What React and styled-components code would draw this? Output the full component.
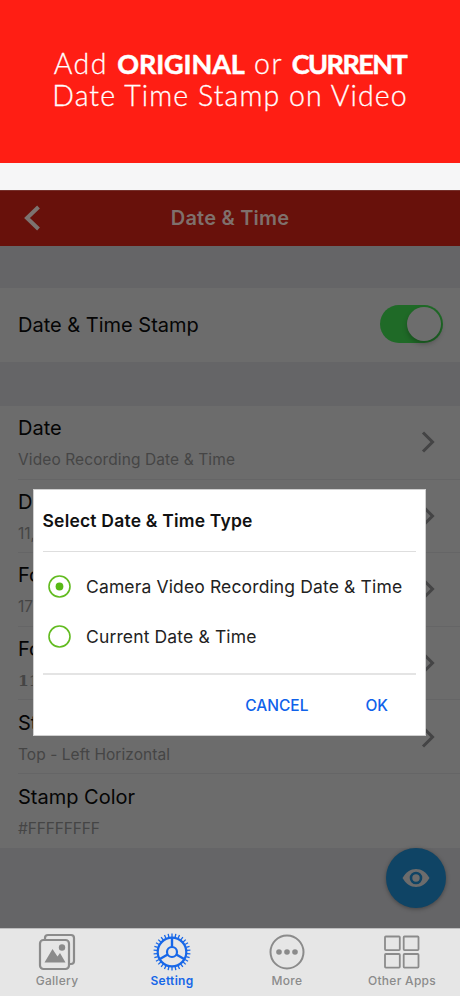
import React from 'react';
import styled, { createGlobalStyle } from 'styled-components';

const GlobalStyle = createGlobalStyle`
  * {
    box-sizing: border-box;
  }
  body {
    margin: 0;
    font-family: Inter, 'Liberation Sans', sans-serif;
  }
`;

const Page = styled.div`
  position: relative;
  display: flex;
  flex-direction: column;
  width: 460px;
  height: 996px;
  overflow: hidden;
  background: #656567;
`;

const Banner = styled.header`
  display: flex;
  flex-direction: column;
  align-items: center;
  height: 163px;
  padding-top: 47px;
  background: #ff1e14;
  color: #fff;
  font-family: Lato, sans-serif;
  font-weight: 300;
`;

const BannerLine = styled.div`
  height: 32px;
  line-height: 32px;
  font-size: 28.5px;
  letter-spacing: ${(props) => props.$spacing}px;
  white-space: nowrap;
  -webkit-text-stroke: 0.3px #fff;
`;

const Strong = styled.strong`
  font-size: 27px;
  font-weight: 700;
  letter-spacing: ${(props) => props.$spacing}px;
  -webkit-text-stroke: 0.5px #fff;
`;

const StatusStrip = styled.div`
  height: 27px;
  background: #f6f6f7;
`;

const NavBar = styled.nav`
  display: grid;
  grid-template-columns: 64px 1fr 64px;
  align-items: center;
  height: 56px;
  padding-bottom: 1px;
  background: #68110b;
  border-top: 1px solid #75302b;
`;

const BackIcon = styled.svg`
  width: 16px;
  height: 26px;
  margin: -1px 0 0 24px;
`;

const NavTitle = styled.h1`
  margin: 0;
  text-align: center;
  color: #7f706c;
  font-size: 20px;
  font-weight: 600;
  letter-spacing: ${(props) => props.$spacing}px;
`;

const Gap = styled.div`
  height: ${(props) => props.$size}px;
  background: #656567;
`;

const SwitchRow = styled.section`
  display: flex;
  align-items: center;
  justify-content: space-between;
  height: 74px;
  padding: 0 17px 0 18px;
  background: #6c6c6c;
`;

const RowTitle = styled.div`
  height: 26px;
  line-height: 26px;
  color: #050505;
  font-size: 20px;
  white-space: nowrap;
`;

const Toggle = styled.div`
  display: flex;
  justify-content: flex-end;
  width: 63px;
  height: 38px;
  margin-top: -2px;
  padding: 2px;
  border-radius: 19px;
  background: #1f6a27;
`;

const Knob = styled.div`
  width: 34px;
  height: 34px;
  border-radius: 50%;
  background: #6d6d6d;
  box-shadow: 0 3px 5px rgba(0, 0, 0, 0.25);
`;

const List = styled.section`
  height: 442px;
  background: #6c6c6c;
`;

const Row = styled.div`
  display: flex;
  justify-content: space-between;
  align-items: center;
  height: 73.6px;
  padding-right: 25px;
  margin-left: 18px;
  border-bottom: ${(props) => (props.$last ? '0' : '1px solid #656566')};
`;

const RowSub = styled.div`
  height: 20px;
  margin-top: 8px;
  line-height: 21px;
  color: #454545;
  font-size: 15.5px;
  letter-spacing: ${(props) => props.$spacing || 0}px;
  white-space: nowrap;
  ${(props) => props.$slab && `
    font-family: 'DejaVu Serif', serif;
    font-weight: 700;
  `}
`;

const ChevronIcon = styled.svg`
  width: 14px;
  height: 22px;
`;

const Fab = styled.div`
  position: absolute;
  left: 386px;
  top: 848px;
  display: flex;
  align-items: center;
  justify-content: center;
  width: 60px;
  height: 60px;
  border-radius: 50%;
  background: #0f4465;
  box-shadow: 0 1px 4px rgba(0, 0, 0, 0.35);
`;

const Dialog = styled.div`
  position: absolute;
  left: 33px;
  top: 489px;
  width: 393px;
  height: 247px;
  padding: 0 9px;
  background: #fff;
  border: 1px solid #d0d0d0;
`;

const DialogTitle = styled.h2`
  height: 62px;
  margin: 0;
  line-height: 61px;
  color: #111;
  font-size: 17.5px;
  font-weight: 600;
  letter-spacing: ${(props) => props.$spacing}px;
  text-indent: -0.5px;
  border-bottom: 1px solid #dedede;
`;

const Options = styled.div`
  height: 123px;
  padding: 9px 4px 0 5px;
  border-bottom: 2px solid #e4e4e4;
`;

const Option = styled.div`
  display: flex;
  align-items: center;
  gap: 15px;
  height: 50px;
  color: #222;
  font-size: 17.5px;
  letter-spacing: ${(props) => props.$spacing}px;
  white-space: nowrap;
`;

const Radio = styled.svg`
  flex: none;
  width: 23px;
  height: 23px;
`;

const Actions = styled.div`
  display: flex;
  justify-content: flex-end;
  gap: 57px;
  padding: 19px 28px 0 0;
`;

const Action = styled.button`
  padding: 0;
  border: 0;
  background: none;
  color: #0f62ea;
  font-family: inherit;
  font-size: 15.5px;
  font-weight: 500;
  line-height: 24px;
`;

const TabBar = styled.footer`
  display: grid;
  grid-template-columns: repeat(4, 115px);
  height: 68px;
  margin-top: auto;
  background: #e6e6e6;
  border-top: 1px solid #bdbdbe;
`;

const Tab = styled.div`
  display: flex;
  flex-direction: column;
  align-items: center;
  padding: 4px 1px 0 0;
  color: ${(props) => (props.$active ? '#1767e8' : '#8b8b8b')};

  svg {
    width: 38px;
    height: 38px;
  }
`;

const TabLabel = styled.span`
  height: 20px;
  line-height: 20px;
  font-size: 12px;
  font-weight: ${(props) => (props.$active ? 600 : 500)};
  letter-spacing: 0.3px;
  white-space: nowrap;
`;

const GalleryIcon = () => (
  <svg viewBox="0 0 38 38" fill="none" stroke="currentColor" strokeWidth="2.2">
    <path d="M7 6V5a3 3 0 0 1 3-3h23a3 3 0 0 1 3 3v23a3 3 0 0 1-3 3h-1" />
    <rect x="2" y="7" width="29" height="29" rx="3.5" />
    <path d="M6.500 29.500 14.500 16l5 7.500L22 20l5.500 9.500Z" fill="currentColor" stroke="none" />
    <circle cx="24" cy="14.5" r="3.2" fill="currentColor" stroke="none" />
  </svg>
);

const SettingIcon = () => (
  <svg viewBox="0 0 38 38" fill="none" stroke="currentColor">
    <circle cx="19" cy="19" r="14.3" strokeWidth="2.2" />
    <circle cx="19" cy="19" r="5" strokeWidth="2.2" />
    {[0, 120, 240].map((angle) => (
      <path key={angle} d="M19 14V5" strokeWidth="2.4" transform={`rotate(${angle} 19 19)`} />
    ))}
    {Array.from({ length: 30 }, (_, i) => (
      <path key={i} d="M19 4V.5" strokeWidth="1.3" transform={`rotate(${i * 12} 19 19)`} />
    ))}
  </svg>
);

const MoreIcon = () => (
  <svg viewBox="0 0 38 38" fill="none" stroke="currentColor" strokeWidth="2">
    <circle cx="19" cy="19" r="16.5" />
    {[11, 19, 27].map((x) => (
      <circle key={x} cx={x} cy="19" r="2.8" fill="currentColor" stroke="none" />
    ))}
  </svg>
);

const AppsIcon = () => (
  <svg viewBox="0 0 38 38" fill="none" stroke="currentColor" strokeWidth="1.8">
    <rect x="2" y="3.500" width="14.800" height="13.600" rx="0.8" />
    <rect x="20.700" y="3.500" width="14.800" height="13.600" rx="0.8" />
    <rect x="2" y="21" width="14.800" height="13.600" rx="0.8" />
    <rect x="20.700" y="21" width="14.800" height="13.600" rx="0.8" />
  </svg>
);

const RadioIcon = ({ checked }) => (
  <Radio viewBox="0 0 23 23">
    <circle cx="11.5" cy="11.5" r="10.5" fill="none" stroke="#62bb20" strokeWidth="1.600" />
    {checked && <circle cx="11.5" cy="11.5" r="3.9" fill="#58b916" />}
  </Radio>
);

const rows = [
  { title: 'Date', sub: 'Video Recording Date & Time', arrow: true, spacing: 0.1 },
  { title: 'Da', sub: '11,', arrow: true },
  { title: 'Fo', sub: '17', arrow: true },
  { title: 'Fo', sub: '11', arrow: true, slab: true },
  { title: 'St', sub: 'Top - Left Horizontal', arrow: true, spacing: 0.05 },
  { title: 'Stamp Color', sub: '#FFFFFFFF', spacing: -0.15 },
];

const tabs = [
  { label: 'Gallery', Icon: GalleryIcon },
  { label: 'Setting', Icon: SettingIcon, active: true },
  { label: 'More', Icon: MoreIcon },
  { label: 'Other Apps', Icon: AppsIcon },
];

const App = () => (
  <Page>
    <GlobalStyle />
    <Banner>
      <BannerLine $spacing={1.5}>
        Add <Strong $spacing={-0.1}>ORIGINAL</Strong> or <Strong $spacing={-1.5}>CURRENT</Strong>
      </BannerLine>
      <BannerLine $spacing={1.1}>Date Time Stamp on Video</BannerLine>
    </Banner>
    <StatusStrip />
    <NavBar>
      <BackIcon viewBox="0 0 16 26" fill="none" stroke="#7c7370" strokeWidth="4">
        <path d="M14.500 2 3 13l11.500 11" />
      </BackIcon>
      <NavTitle $spacing={0.2}>Date &amp; Time</NavTitle>
    </NavBar>
    <Gap $size={42} />
    <SwitchRow>
      <RowTitle>Date &amp; Time Stamp</RowTitle>
      <Toggle><Knob /></Toggle>
    </SwitchRow>
    <Gap $size={44} />
    <List>
      {rows.map((row, i) => (
        <Row key={i} $last={i === rows.length - 1}>
          <div>
            <RowTitle>{row.title}</RowTitle>
            <RowSub $slab={row.slab} $spacing={row.spacing}>{row.sub}</RowSub>
          </div>
          {row.arrow && (
            <ChevronIcon viewBox="0 0 14 22" fill="none" stroke="#444445" strokeWidth="3">
              <path d="m2 1.500 9.500 9.500L2 20.500" />
            </ChevronIcon>
          )}
        </Row>
      ))}
    </List>
    <TabBar>
      {tabs.map(({ label, Icon, active }) => (
        <Tab key={label} $active={active}>
          <Icon />
          <TabLabel $active={active}>{label}</TabLabel>
        </Tab>
      ))}
    </TabBar>
    <Fab>
      <svg width="28" height="20" viewBox="0 0 28 20">
        <path d="M.5 10C4 4 8.500 1 14 1s10 3 13.500 9c-3.500 6-8 9-13.500 9S4 16 .5 10Z" fill="#6c6c6c" />
        <circle cx="14" cy="10" r="5" fill="#6c6c6c" stroke="#0f4465" strokeWidth="2.600" />
      </svg>
    </Fab>
    <Dialog>
      <DialogTitle $spacing={0.2}>Select Date &amp; Time Type</DialogTitle>
      <Options>
        <Option $spacing={0.14}><RadioIcon checked />Camera Video Recording Date &amp; Time</Option>
        <Option $spacing={0.14}><RadioIcon />Current Date &amp; Time</Option>
      </Options>
      <Actions>
        <Action>CANCEL</Action>
        <Action>OK</Action>
      </Actions>
    </Dialog>
  </Page>
);

export default App;
